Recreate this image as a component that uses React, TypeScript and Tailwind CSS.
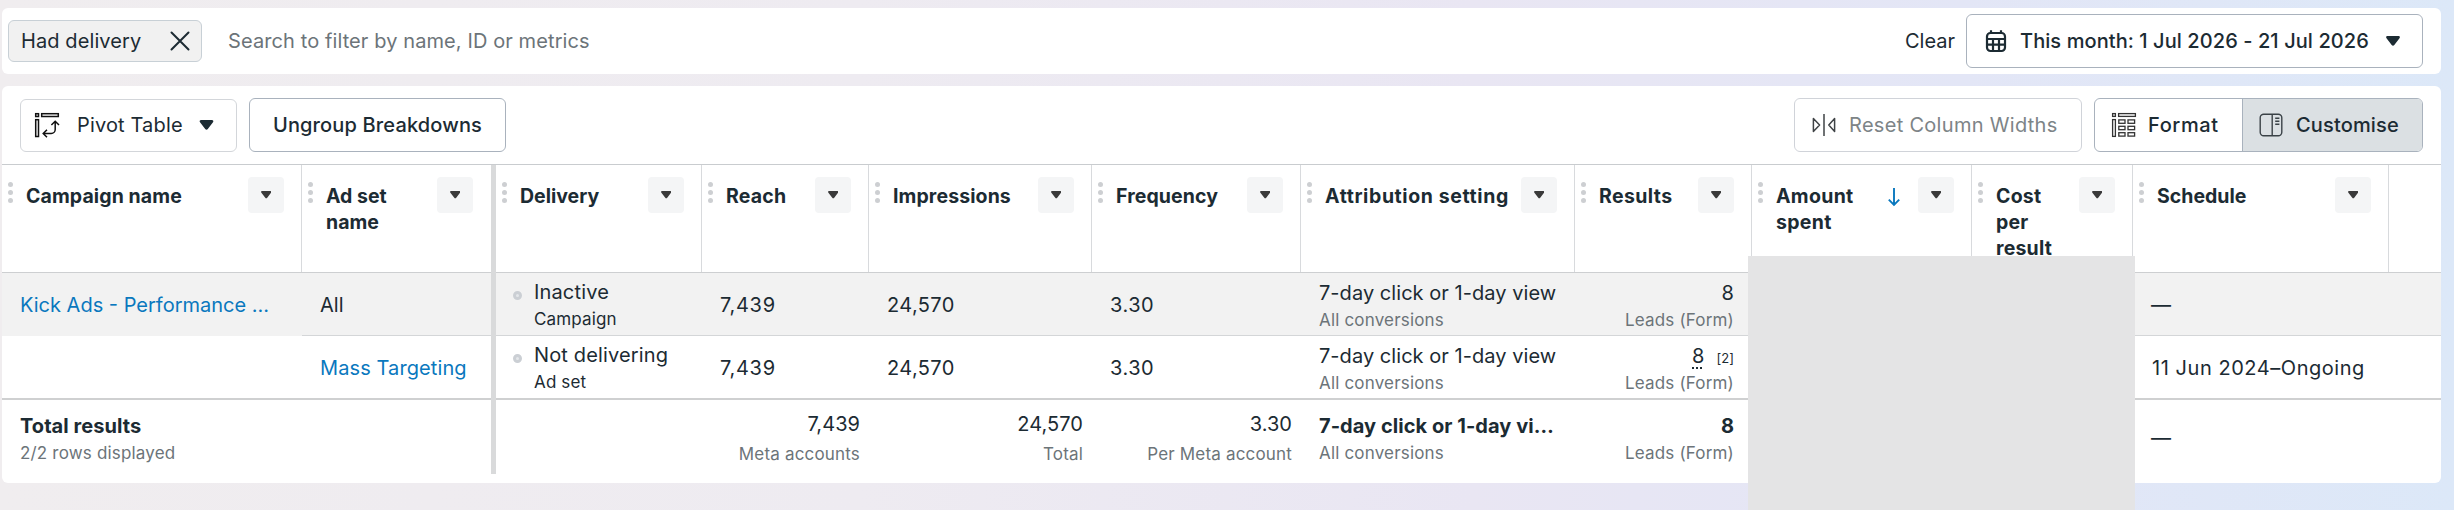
import { ReactNode } from 'react';
import { clsx } from 'clsx';

interface Column {
  label: ReactNode;
  width: string;
  tracking?: string;
  sorted?: boolean;
}

const columns: Column[] = [
  { label: 'Campaign name', width: 'w-[300px]', tracking: 'tracking-[0.1px]' },
  { label: <>Ad set<br />name</>, width: 'w-[190px]' },
  { label: 'Delivery', width: 'w-[206px]' },
  { label: 'Reach', width: 'w-[167px]', tracking: 'tracking-[0.2px]' },
  { label: 'Impressions', width: 'w-[223px]', tracking: 'tracking-[0.1px]' },
  { label: 'Frequency', width: 'w-[209px]', tracking: 'tracking-[0.1px]' },
  { label: 'Attribution setting', width: 'w-[274px]', tracking: 'tracking-[0.6px]' },
  { label: 'Results', width: 'w-[177px]', tracking: 'tracking-[0.4px]' },
  { label: <>Amount<br />spent</>, width: 'w-[220px]', tracking: 'tracking-[0.3px]', sorted: true },
  { label: <>Cost<br />per<br />result</>, width: 'w-[161px]', tracking: 'tracking-[0.2px]' },
  { label: 'Schedule', width: 'w-[256px]' },
];

/* ── Icons ── */
function Caret({ className }: { className: string }) {
  return (
    <svg viewBox="0 0 14 10" className={className} fill="currentColor">
      <path d="M1.6 0h10.8c1.3 0 1.9 1.2 1.1 2.2L8.3 9c-.7.9-1.9.9-2.6 0L.5 2.2C-.3 1.2.3 0 1.6 0z" />
    </svg>
  );
}

function PivotIcon() {
  return (
    <svg width="26" height="26" viewBox="0 0 26 26" fill="none" stroke="#111" strokeWidth="1.5">
      <rect x="1.7" y="1.7" width="2.8" height="2.8" />
      <rect x="7.7" y="1.7" width="16.6" height="2.8" />
      <rect x="1.7" y="7.7" width="2.8" height="16.8" />
      <path d="M21.2 9.5v8a4 4 0 0 1-4 4H9.5M17.4 13l3.8-3.8L25 13M13 17.7l-3.8 3.8 3.8 3.8" />
    </svg>
  );
}

function CalendarIcon() {
  return (
    <svg width="22" height="24" viewBox="0 0 22 24" fill="none" stroke="currentColor" strokeWidth="2.2">
      <rect x="2" y="4" width="18" height="18" rx="3.5" />
      <path d="M6 1.2V5M16 1.2V5M2 10h18M2 15.6h18M8 10v12M14 10v12" />
    </svg>
  );
}

function ResetIcon() {
  return (
    <svg width="24" height="24" viewBox="0 0 24 24" fill="none" stroke="#3f4346" strokeWidth="1.5" strokeLinejoin="round">
      <path d="M12 1v22M1.4 5.6v12.8L7.6 12zM22.6 5.6v12.8L16.8 12z" />
    </svg>
  );
}

function FormatIcon() {
  return (
    <svg width="26" height="26" viewBox="0 0 26 26" fill="none" stroke="#333" strokeWidth="1.3">
      <rect x="1.6" y="1.6" width="2.8" height="2.8" />
      <rect x="7.6" y="1.6" width="16.8" height="2.8" />
      <rect x="1.6" y="7.6" width="2.8" height="16.8" />
      {[7.9, 14.3, 20.7].map((y) => (
        <g key={y}>
          <rect x="7.8" y={y} width="6.2" height="3.4" />
          <rect x="17" y={y} width="6.6" height="3.4" />
        </g>
      ))}
    </svg>
  );
}

function CustomiseIcon() {
  return (
    <svg width="24" height="24" viewBox="0 0 24 24" fill="none" stroke="#3a4247" strokeWidth="1.4">
      <rect x="1.2" y="1.2" width="21.6" height="21.6" rx="3.5" />
      <path d="M13.2 1v22M16.2 5.3h4.2M16.2 8.3h4.2M16.2 11.3h4.2" />
    </svg>
  );
}

function HeaderCell({ label, width, tracking, sorted }: Column) {
  return (
    <div className={clsx('flex h-full shrink-0 items-start border-r border-[#d8dadd] pl-1.5 pr-[17px]', width)}>
      {/* drag handle, last dot is clipped */}
      <div className="mt-[17px] flex h-6 w-[5px] shrink-0 flex-col gap-[3px] overflow-hidden">
        {[0, 1, 2, 3].map((i) => (
          <i key={i} className="size-[5px] shrink-0 rounded-full bg-[#cdcfd2]" />
        ))}
      </div>
      <span className={clsx('ml-[13px] mt-[18px] whitespace-nowrap text-[19.5px] font-bold leading-[26px]', tracking)}>{label}</span>
      <span className="flex-1" />
      {sorted && (
        <svg width="12" height="20" viewBox="0 0 12 20" className="mr-[18px] mt-[22px]" fill="none" stroke="#0a78be" strokeWidth="1.9">
          <path d="M6 1v17M.8 12.6L6 18l5.2-5.4" />
        </svg>
      )}
      <button className="mt-3 flex size-9 shrink-0 items-center justify-center rounded-[4px] bg-[#f4f5f6] text-[#3a3a3a]">
        <Caret className="h-[7.5px] w-[10.5px]" />
      </button>
    </div>
  );
}

interface CellProps {
  width: string;
  main?: ReactNode;
  sub?: string;
  className?: string;
}

/* Two lines: value and a smaller caption */
function StackCell({ width, main, sub, className }: CellProps) {
  return (
    <div className={clsx('flex shrink-0 flex-col whitespace-nowrap pl-[18px]', width, className)}>
      <span className="h-[26px] leading-[26px] tracking-[0.05px]">{main}</span>
      <span className="pt-px text-[17px] leading-[26px] tracking-[0.18px] text-[#6c7479]">{sub}</span>
    </div>
  );
}

function DeliveryCell({ status, level }: { status: string; level: string }) {
  return (
    <div className="flex w-[206px] shrink-0 pl-[17px] pt-[6px]">
      <i className="mt-[12px] size-[9px] rounded-full border-[3.5px] border-[#cbcfd4] bg-[#e4e7ea]" />
      <div className="ml-3 flex flex-col whitespace-nowrap">
        <span className="leading-[27px] tracking-[0.15px]">{status}</span>
        <span className="pt-px text-[17px] leading-[25px] tracking-[0.15px]">{level}</span>
      </div>
    </div>
  );
}

function MetricCells() {
  return (
    <>
      <div className="w-[167px] shrink-0 pl-[18px] leading-[65px] tracking-[0.7px]">7,439</div>
      <div className="w-[223px] shrink-0 pl-[18px] leading-[65px] tracking-[0.4px]">24,570</div>
      <div className="w-[209px] shrink-0 pl-[18px] leading-[65px] tracking-[0.5px]">3.30</div>
    </>
  );
}

function Divider() {
  return <div className="-mb-0.5 -ml-px w-[5px] shrink-0 bg-[#d9dadb]" />;
}

export default function App() {
  return (
    <div
      className="relative h-[510px] w-[2454px] overflow-hidden bg-[linear-gradient(90deg,#f0edef_0%,#eeebf1_35%,#e9e6f3_60%,#e3e6f6_80%,#dce8f8_100%)] pl-0.5 pt-2 text-[20px] text-[#1c2b33]"
      style={{ fontFamily: 'Inter, sans-serif' }}
    >
      {/* ── Search bar ── */}
      <div className="flex h-[66px] w-[2439px] items-center rounded-md bg-white pl-1.5 pr-[18px]">
        <div className="flex h-[42px] w-[194px] items-center rounded-md border border-[#c8d0d6] bg-[#f1f1f1] pl-3">
          <span className="w-[149px] whitespace-nowrap tracking-[0.1px]">Had delivery</span>
          <svg width="20" height="20" viewBox="0 0 20 20" fill="none" stroke="currentColor" strokeWidth="2" strokeLinecap="round">
            <path d="M1.5 1.5l17 17M18.5 1.5l-17 17" />
          </svg>
        </div>
        <span className="ml-[26px] tracking-[0.1px] text-[#6c7479]">Search to filter by name, ID or metrics</span>
        <span className="flex-1" />
        <span className="mr-[11px]">Clear</span>
        <button className="flex h-[54px] w-[457px] items-center rounded-md border border-[#a9b2bd] pl-[18px] font-medium">
          <CalendarIcon />
          <span className="ml-[13px] w-[366px] whitespace-nowrap text-left tracking-[0.08px]">This month: 1 Jul 2026 - 21 Jul 2026</span>
          <Caret className="h-2.5 w-[14px]" />
        </button>
      </div>

      <div className="mt-3 h-[397px] w-[2439px] overflow-hidden rounded-md bg-white">
        {/* ── Toolbar ── */}
        <div className="flex h-[79px] items-start border-b border-[#c9cccf] px-[18px] pt-3">
          <button className="mt-px flex h-[53px] w-[217px] items-center rounded-md border border-[#d3d6da] pb-px pl-[13px]">
            <PivotIcon />
            <span className="ml-[17px] w-[122px] whitespace-nowrap text-left tracking-[0.15px]">Pivot Table</span>
            <Caret className="h-2.5 w-[15px]" />
          </button>
          <button className="ml-3 h-[54px] w-[257px] rounded-md border border-[#a9b2bd] font-medium tracking-[0.15px]">Ungroup Breakdowns</button>
          <span className="flex-1" />
          <button className="flex h-[54px] w-[288px] items-center rounded-md border border-[#d0d3d9] pl-[17px] text-[#7d8487]">
            <ResetIcon />
            <span className="ml-[13px] whitespace-nowrap tracking-[0.3px]">Reset Column Widths</span>
          </button>
          <div className="ml-3 flex h-[54px] w-[329px] overflow-hidden rounded-md border border-[#a9b2bd] font-medium">
            <button className="flex w-[148px] items-center border-r border-[#a9b2bd] pl-4">
              <FormatIcon />
              <span className="ml-[11px] tracking-[0.6px]">Format</span>
            </button>
            <button className="flex flex-1 items-center bg-[#dbe0e3] pl-4">
              <CustomiseIcon />
              <span className="ml-[13px] tracking-[0.15px]">Customise</span>
            </button>
          </div>
        </div>

        {/* ── Column headers ── */}
        <div className="flex h-[108px] border-b border-[#cdcfd1]">
          <HeaderCell {...columns[0]} />
          <div className="w-[190px] shrink-0 [&>div]:border-r-0 [&>div]:pr-[19px]">
            <HeaderCell {...columns[1]} />
          </div>
          <Divider />
          {columns.slice(2).map((c, i) => <HeaderCell key={i} {...c} />)}
        </div>

        {/* ── Campaign row ── */}
        <div className="flex h-[63px] bg-[#f2f2f2]">
          <div className="w-[300px] shrink-0 whitespace-nowrap pl-[18px] leading-[65px] text-[#0a78be]">Kick Ads - Performance …</div>
          <div className="flex flex-1 border-b border-[#d4d6d8]">
            <div className="w-[190px] shrink-0 pl-[18px] leading-[65px]">All</div>
            <Divider />
            <DeliveryCell status="Inactive" level="Campaign" />
            <MetricCells />
            <StackCell width="w-[274px]" main="7-day click or 1-day view" sub="All conversions" className="pt-[7px]" />
            <StackCell width="w-[177px]" main="8" sub="Leads (Form)" className="items-end pr-[18px] pt-[7px]" />
            <div className="w-[381px]" />
            <div className="pl-[18px] leading-[65px]">—</div>
          </div>
        </div>

        {/* ── Ad set row ── */}
        <div className="flex h-[64px] border-b-2 border-[#cfd0d1]">
          <div className="w-[300px] shrink-0" />
          <div className="w-[190px] shrink-0 whitespace-nowrap pl-[18px] leading-[65px] tracking-[0.1px] text-[#0a78be]">Mass Targeting</div>
          <Divider />
          <DeliveryCell status="Not delivering" level="Ad set" />
          <MetricCells />
          <StackCell width="w-[274px]" main="7-day click or 1-day view" sub="All conversions" className="pt-[7px]" />
          <StackCell
            width="w-[177px]"
            main={
              <>
                <span className="underline decoration-dotted decoration-2 underline-offset-4">8</span>
                <span className="ml-3 text-[13px]">[2]</span>
              </>
            }
            sub="Leads (Form)"
            className="items-end pr-[18px] pt-[7px]"
          />
          <div className="w-[381px]" />
          <div className="whitespace-nowrap pl-[19px] leading-[65px] tracking-[0.55px]">11 Jun 2024–Ongoing</div>
        </div>

        {/* ── Totals ── */}
        <div className="flex h-[74px]">
          <StackCell width="w-[490px]" main={<b>Total results</b>} sub="2/2 rows displayed" className="pt-[13px]" />
          <div className="-ml-px w-[5px] shrink-0 bg-[#d9dadb]" />
          <div className="w-[206px] shrink-0" />
          <StackCell width="w-[167px]" main="7,439" sub="Meta accounts" className="items-end gap-[3px] pr-[9px] pt-[11px]" />
          <StackCell width="w-[223px]" main="24,570" sub="Total" className="items-end gap-[3px] pr-[9px] pt-[11px]" />
          <StackCell width="w-[209px]" main="3.30" sub="Per Meta account" className="items-end gap-[3px] pr-[9px] pt-[11px]" />
          <StackCell width="w-[274px]" main={<b>7-day click or 1-day vi…</b>} sub="All conversions" className="pt-[13px]" />
          <StackCell width="w-[177px]" main={<b>8</b>} sub="Leads (Form)" className="items-end pr-[18px] pt-[13px]" />
          <div className="w-[381px]" />
          <div className="pl-[18px] pt-[25px] leading-[26px]">—</div>
        </div>
      </div>

      {/* Redacted spend and cost values */}
      <div className="absolute bottom-0 left-[1748px] top-64 w-[387px] bg-[#e4e4e5]" />
    </div>
  );
}
